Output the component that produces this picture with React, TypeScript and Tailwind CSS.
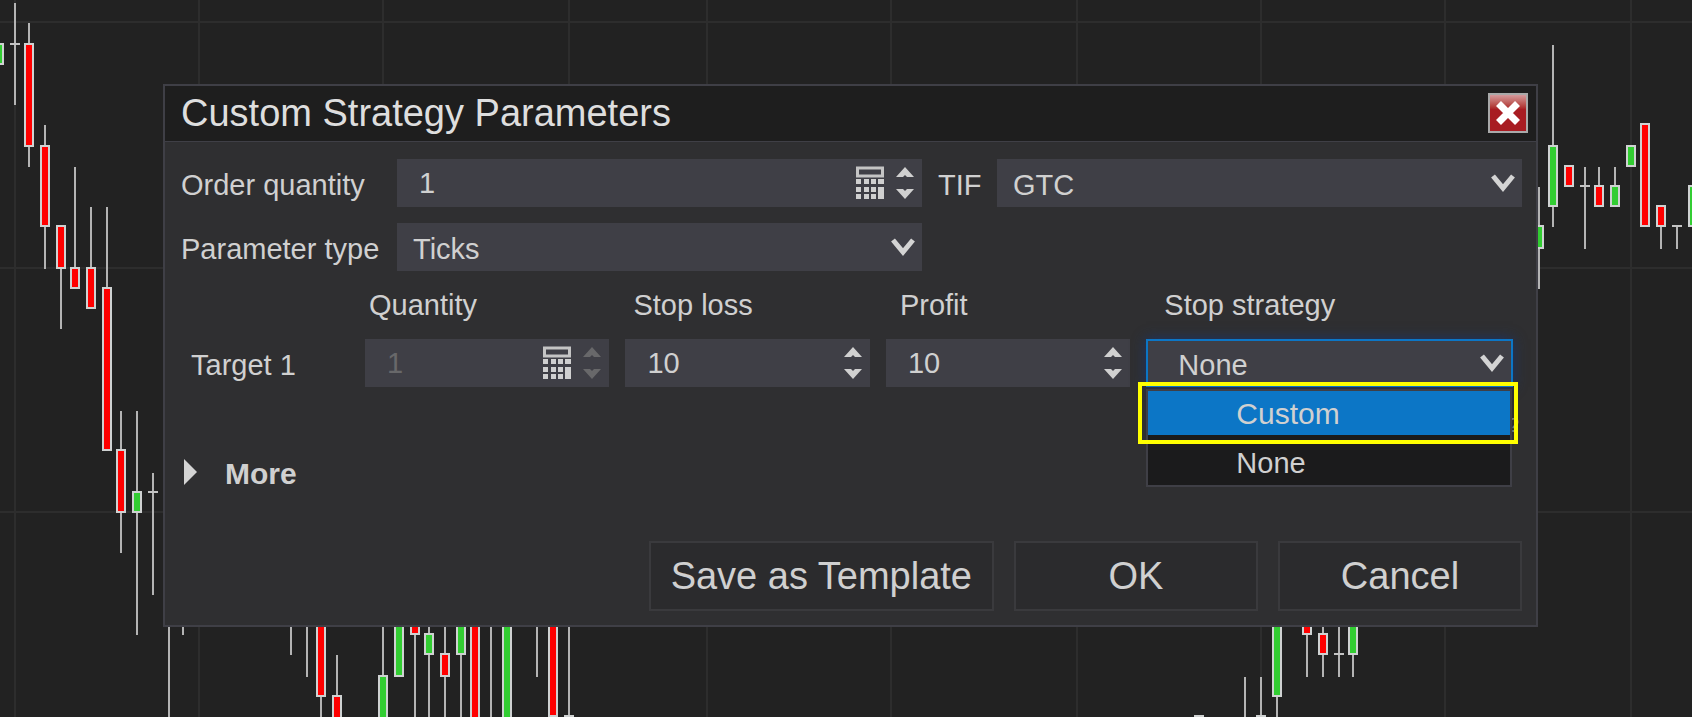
import React from "react";
import clsx from "clsx";

type Candle = {
  x: number;
  wick?: [number, number];
  body?: [number, number];
  tick?: number;
  up?: boolean;
};

const candles: Candle[] = [
  { x: -1, wick: [65, 166], body: [43, 65], up: true },
  { x: 15, wick: [3, 105], tick: 44 },
  { x: 29, wick: [23, 167], body: [43, 147] },
  { x: 45, wick: [125, 269], body: [145, 227] },
  { x: 61, wick: [225, 329], body: [225, 269] },
  { x: 75, wick: [167, 289], body: [267, 289] },
  { x: 91, wick: [207, 309], body: [267, 309] },
  { x: 107, wick: [207, 451], body: [287, 451] },
  { x: 121, wick: [411, 553], body: [449, 513] },
  { x: 137, wick: [411, 635], body: [491, 513], up: true },
  { x: 153, wick: [473, 595], tick: 492 },
  { x: 169, wick: [600, 720] },
  { x: 183, wick: [600, 635] },
  { x: 291, wick: [600, 655] },
  { x: 307, wick: [600, 677] },
  { x: 321, wick: [600, 720], body: [600, 697] },
  { x: 337, wick: [655, 720], body: [695, 730] },
  { x: 383, wick: [600, 720], body: [675, 730], up: true },
  { x: 399, body: [600, 677], up: true },
  { x: 415, wick: [600, 720], body: [600, 635] },
  { x: 429, wick: [600, 720], body: [633, 655], up: true },
  { x: 445, wick: [600, 720], body: [653, 677] },
  { x: 461, wick: [600, 720], body: [600, 655], up: true },
  { x: 475, body: [600, 730] },
  { x: 491, wick: [600, 720] },
  { x: 507, body: [600, 730], up: true },
  { x: 537, wick: [600, 677] },
  { x: 553, body: [600, 717] },
  { x: 569, wick: [600, 720], body: [715, 730] },
  { x: 1199, body: [715, 730] },
  { x: 1245, wick: [677, 720] },
  { x: 1261, wick: [677, 720], body: [715, 730], up: true },
  { x: 1277, wick: [600, 720], body: [600, 697], up: true },
  { x: 1307, wick: [600, 677], body: [600, 635] },
  { x: 1323, wick: [600, 677], body: [633, 655] },
  { x: 1339, wick: [600, 677], tick: 654 },
  { x: 1353, wick: [600, 677], body: [600, 655], up: true },
  { x: 1539, wick: [187, 289], body: [225, 249], up: true },
  { x: 1553, wick: [45, 227], body: [145, 207], up: true },
  { x: 1569, body: [165, 187] },
  { x: 1585, wick: [167, 249], tick: 186 },
  { x: 1599, wick: [167, 207], body: [185, 207] },
  { x: 1615, wick: [167, 207], body: [185, 207], up: true },
  { x: 1631, body: [145, 167], up: true },
  { x: 1645, body: [123, 227] },
  { x: 1661, wick: [205, 249], body: [205, 227] },
  { x: 1677, wick: [226, 249], tick: 226 },
  { x: 1693, wick: [167, 227], body: [185, 227], up: true },
];

const gridX = [15, 199, 383, 569, 707, 891, 1077, 1261, 1445, 1631];
const gridY = [22, 268, 512];

const Chart = () => (
  <svg className="absolute inset-0 h-full w-full" aria-hidden="true">
    {gridX.map((x) => (
      <rect key={x} x={x - 1} y={0} width={2} height="100%" fill="#2d2d2d" />
    ))}
    {gridY.map((y) => (
      <rect key={y} x={0} y={y - 1} width="100%" height={2} fill="#2d2d2d" />
    ))}
    {candles.map((c) => (
      <g key={c.x}>
        {c.wick && <rect x={c.x - 1} y={c.wick[0]} width={2} height={c.wick[1] - c.wick[0]} fill="#b4b4b4" />}
        {c.tick && <rect x={c.x - 5} y={c.tick - 1} width={10} height={2} fill="#c4c4c4" />}
        {c.body && (
          <rect
            x={c.x - 4}
            y={c.body[0] + 1}
            width={8}
            height={c.body[1] - c.body[0] - 2}
            fill={c.up ? "#32cd32" : "#ff0000"}
            stroke="#cfd2d2"
            strokeWidth={2}
          />
        )}
      </g>
    ))}
  </svg>
);

const CalculatorIcon = () => (
  <svg width="28" height="34" viewBox="0 0 28 34" fill="#d0d0d0">
    <rect x="1.5" y="2" width="25" height="8" fill="none" stroke="#c4c4c4" strokeWidth="3" />
    {[13, 21, 28].map((y) =>
      [0, 8, 15].map((x) => <rect key={`${x}-${y}`} x={x} y={y} width="5" height="5" />)
    )}
    <rect x="22" y="13" width="6" height="5" />
    <rect x="22" y="21" width="6" height="12" />
  </svg>
);

const Chevron = () => (
  <svg
    className="pointer-events-none absolute top-1/2 right-[7px] -translate-y-1/2"
    width="24"
    height="18"
    viewBox="0 0 24 18"
    fill="none"
    stroke="#d4d4d4"
    strokeWidth="5"
  >
    <path d="M2 2 12 14 22 2" />
  </svg>
);

const Spinner = ({ name, disabled }: { name: string; disabled?: boolean }) => (
  <div className={clsx("flex flex-col gap-3", disabled ? "text-[#68686a]" : "text-[#d0d0d0]")}>
    <button type="button" aria-label={`Increase ${name}`} disabled={disabled} className="block">
      <svg width="18" height="10" viewBox="0 0 18 10" fill="currentColor">
        <path d="M0 10 9 0 18 10H11L9 8 7 10Z" />
      </svg>
    </button>
    <button type="button" aria-label={`Decrease ${name}`} disabled={disabled} className="block">
      <svg width="18" height="10" viewBox="0 0 18 10" fill="currentColor">
        <path d="M0 0 9 10 18 0H11L9 2 7 0Z" />
      </svg>
    </button>
  </div>
);

type NumberFieldProps = {
  id: string;
  name: string;
  value: string;
  calculator?: boolean;
  disabled?: boolean;
};

const NumberField = ({ id, name, value, calculator, disabled }: NumberFieldProps) => (
  <div className="flex h-12 items-center gap-3 bg-[#3f3f46] pr-2">
    <input
      id={id}
      type="text"
      defaultValue={value}
      disabled={disabled}
      className={clsx(
        "h-full w-full min-w-0 flex-1 bg-transparent pl-[22px] text-[29px] outline-none",
        disabled && "text-[#68686a]"
      )}
    />
    {calculator && (
      <button type="button" aria-label={`${name} calculator`} disabled={disabled}>
        <CalculatorIcon />
      </button>
    )}
    <Spinner name={name} disabled={disabled} />
  </div>
);

const SelectField = ({ id, options }: { id: string; options: string[] }) => (
  <div className="relative h-12 bg-[#3f3f46]">
    <select id={id} className="h-full w-full appearance-none bg-transparent pt-1 pl-4 text-[29px] outline-none">
      {options.map((option) => (
        <option key={option}>{option}</option>
      ))}
    </select>
    <Chevron />
  </div>
);

const StopStrategy = () => (
  <div className="relative h-12 border-2 border-[#0c76c6] bg-[#3f3f46] shadow-[0_0_12px_#1c3468]">
    <select
      id="stop-strategy"
      defaultValue="None"
      className="h-full w-full appearance-none bg-transparent pt-1 pl-[30px] outline-none"
    >
      <option>Custom</option>
      <option>None</option>
    </select>
    <Chevron />
    <span className="absolute top-[72px] -right-2 text-xl leading-6 text-[#77777a]">?</span>
    <ul
      role="listbox"
      aria-label="Stop strategy"
      className="absolute top-12 -right-px -left-0.5 border-2 border-[#3f3f46] bg-[#1b1b1c]"
    >
      <li role="option" aria-selected="true" className="h-11 bg-[#0c76c6] pl-[88px] text-[30px] leading-[46px]">
        Custom
      </li>
      <li role="option" aria-selected="false" className="h-[50px] pl-[88px] leading-[56px]">
        None
      </li>
    </ul>
    <div className="pointer-events-none absolute top-[41px] -right-[7px] -left-[10px] h-[62px] border-4 border-[#ffff00]" />
  </div>
);

const footerButton = "h-[70px] border-2 border-[#3a3a3d] bg-[#2b2b2d] text-[38px]";

const App = () => {
  return (
    <main className="relative min-h-screen overflow-hidden bg-[#222222] pt-[84px] pr-[154px] pb-[90px] pl-[163px] font-['Liberation_Sans',Arial,sans-serif]">
      <Chart />
      <form
        role="dialog"
        aria-labelledby="dialog-title"
        className="relative border-2 border-[#3f3f46] bg-[#2f2f31] text-[30px] leading-9 text-[#d0d0d0]"
      >
        <header className="flex h-14 items-center justify-between border-b border-[#3f3f46] bg-[#1e1e1e] pr-2 pb-0.5 pl-4">
          <h1 id="dialog-title" className="text-[38px] text-[#dedede]">
            Custom Strategy Parameters
          </h1>
          <button
            type="button"
            aria-label="Close"
            className="flex size-10 items-center justify-center border-2 border-[#a9a9a9] bg-linear-to-b from-[#d49a9c] via-[#a81c22] via-40% to-[#a81c22]"
          >
            <svg width="24" height="24" viewBox="0 0 24 24" stroke="#fff" strokeWidth="7">
              <path d="M2.5 2.5 21.5 21.5M21.5 2.5 2.5 21.5" />
            </svg>
          </button>
        </header>

        <div className="pt-[17px] pr-[14px] pb-[14px] pl-4">
          <div className="grid grid-cols-[216px_1fr_75px_1fr] items-center gap-y-4 text-[29px]">
            <label htmlFor="order-quantity" className="pt-1">Order quantity</label>
            <NumberField id="order-quantity" name="Order quantity" value="1" calculator />
            <label htmlFor="tif" className="pt-1 pl-4">TIF</label>
            <SelectField id="tif" options={["GTC", "Day"]} />
            <label htmlFor="parameter-type" className="pt-1">Parameter type</label>
            <SelectField id="parameter-type" options={["Ticks", "Currency", "Percent", "Price"]} />
          </div>

          <div className="mt-4 mr-[9px] grid grid-cols-[168px_2fr_2fr_2fr_3fr] items-center gap-4 text-[29px]">
            <span />
            <label htmlFor="target-quantity" className="pl-1">Quantity</label>
            <label htmlFor="stop-loss" className="pl-2">Stop loss</label>
            <label htmlFor="profit" className="pl-[14px]">Profit</label>
            <label htmlFor="stop-strategy" className="pl-[18px]">Stop strategy</label>
            <span className="pt-1 pl-[10px]">Target 1</span>
            <NumberField id="target-quantity" name="Quantity" value="1" calculator disabled />
            <NumberField id="stop-loss" name="Stop loss" value="10" />
            <NumberField id="profit" name="Profit" value="10" />
            <StopStrategy />
          </div>

          <button type="button" className="mt-[69px] flex items-start gap-7 pl-[3px] font-bold">
            <svg width="13" height="26" viewBox="0 0 13 26" fill="#d4d4d4" className="mt-[3px]">
              <path d="M0 0 13 13 0 26Z" />
            </svg>
            More
          </button>

          <div className="mt-[49px] flex justify-end gap-5">
            <button type="button" className={clsx(footerButton, "px-5")}>Save as Template</button>
            <button type="submit" className={clsx(footerButton, "w-[244px]")}>OK</button>
            <button type="button" className={clsx(footerButton, "w-[244px]")}>Cancel</button>
          </div>
        </div>
      </form>
    </main>
  );
};

export default App;
